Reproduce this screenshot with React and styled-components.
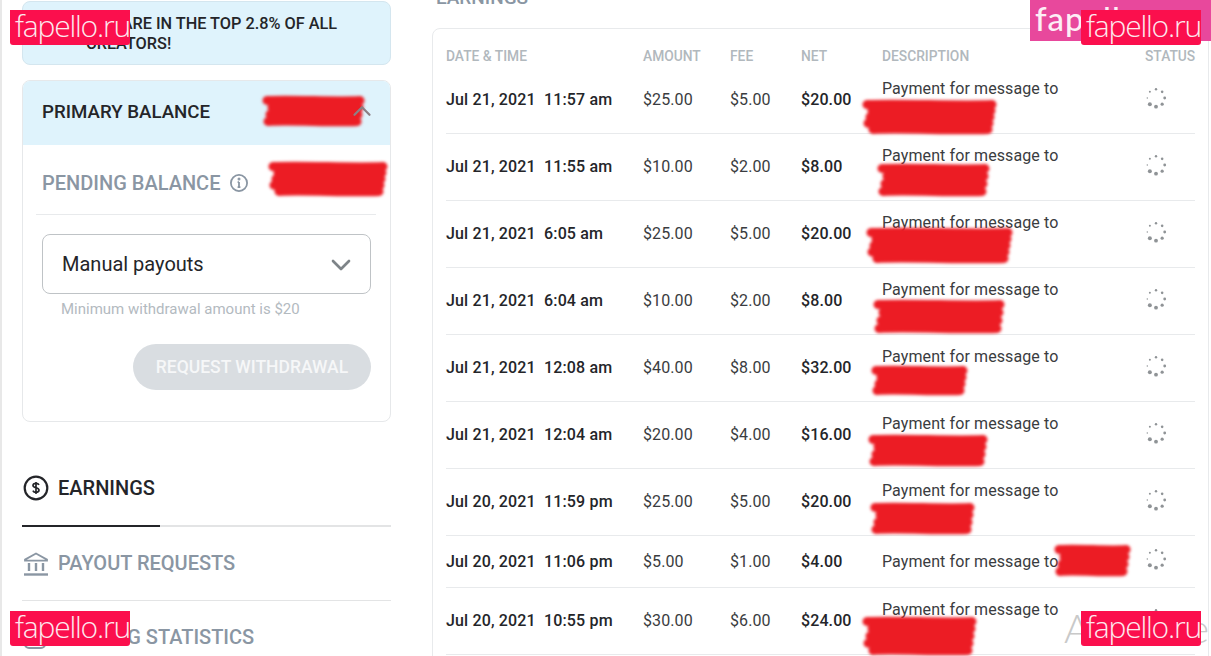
import React from "react";
import styled, { createGlobalStyle } from "styled-components";
import { ChevronDown, ChevronUp } from "lucide-react";

const Global = createGlobalStyle`
  html, body { margin: 0; padding: 0; background: #fff; }
  body { font-family: Roboto, "Liberation Sans", sans-serif; color: #242529; }
`;

const Page = styled.div`
  position: relative;
  width: 1211px;
  height: 656px;
  overflow: hidden;
  display: flex;
  align-items: flex-start;
  background: #fff;
  box-sizing: border-box;
  box-shadow: inset 2px 0 0 #e8e8e8;
  padding-left: 22px;
`;

const Side = styled.aside`
  width: 369px;
  flex: none;
  padding-top: 1px;
`;

const Banner = styled.div`
  box-sizing: border-box;
  height: 64px;
  padding: 12px 20px 0 63px;
  background: #dff3fc;
  border: 1px solid #d4e6ef;
  border-radius: 8px;
  font-size: 16.3px;
  font-weight: 500;
  line-height: 20px;
  color: #242529;
  text-transform: uppercase;
`;

const BalanceCard = styled.section`
  box-sizing: border-box;
  height: 342px;
  margin-top: 15px;
  border: 1px solid #e6e8ea;
  border-radius: 8px;
  overflow: hidden;
`;

const BalanceHead = styled.div`
  box-sizing: border-box;
  height: 64px;
  padding: 0 13px 2px 19px;
  display: flex;
  align-items: center;
  justify-content: space-between;
  background: #dff3fc;
  font-size: 18.7px;
  font-weight: 500;
  color: #242529;
  text-transform: uppercase;
  svg { position: relative; z-index: 1; color: #8d7f84; margin-top: -2px; }
`;

const PendingRow = styled.div`
  height: 70px;
  margin: 0 14px 0 13px;
  padding: 6px 0 0 6px;
  display: flex;
  align-items: center;
  gap: 9px;
  border-bottom: 1px solid #e8eaec;
  box-sizing: border-box;
  font-size: 20px;
  font-weight: 500;
  color: #8a96a3;
`;

const Body = styled.div`
  padding: 19px 19px 0;
  display: flex;
  flex-direction: column;
`;

const Select = styled.div`
  box-sizing: border-box;
  height: 60px;
  display: flex;
  align-items: center;
  justify-content: space-between;
  padding: 0 13px 0 19px;
  border: 1px solid #bfc3c6;
  border-radius: 8px;
  font-size: 20px;
  color: #242529;
  svg { color: #7e8488; margin-top: 2px; }
`;

const Hint = styled.div`
  margin: 6px 0 0 19px;
  font-size: 15px;
  line-height: 18px;
  color: #b3babf;
`;

const WithdrawButton = styled.button`
  align-self: flex-end;
  width: 238px;
  height: 46px;
  margin-top: 26px;
  border: 0;
  border-radius: 23px;
  background: #d9dde1;
  color: #f6f7f8;
  font: 500 17.5px Roboto, sans-serif;
  text-transform: uppercase;
  padding: 0;
`;

const Tabs = styled.nav`
  margin-top: 30px;
  display: flex;
  flex-direction: column;
`;

const Tab = styled.div`
  position: relative;
  box-sizing: border-box;
  height: ${(p) => p.$h}px;
  display: flex;
  align-items: ${(p) => (p.$active ? "flex-start" : "center")};
  padding: ${(p) => (p.$active ? "23px 0 0 1px" : "0 0 0 1px")};
  gap: 9px;
  border-bottom: ${(p) => p.$bw}px solid #e3e4e5;
  font-size: 20px;
  font-weight: 500;
  line-height: 27px;
  color: ${(p) => (p.$active ? "#242529" : "#8a96a3")};
  &::after {
    content: "";
    display: ${(p) => (p.$active ? "block" : "none")};
    position: absolute;
    left: 0;
    bottom: -2px;
    width: 138px;
    height: 2px;
    background: #242529;
  }
`;

const Main = styled.main`
  width: 777px;
  flex: none;
  margin: -9px 0 0 41px;
`;

const Heading = styled.h2`
  margin: 0 0 0 4px;
  height: 37px;
  font-size: 19px;
  line-height: 14px;
  font-weight: 500;
  color: #8a96a3;
`;

const Card = styled.section`
  box-sizing: border-box;
  height: 680px;
  padding: 0 13px;
  border: 1px solid #e8eaec;
  border-radius: 8px;
`;

const Columns = `
  display: grid;
  grid-template-columns: 197px 87px 71px 81px 1fr 50px;
  align-items: center;
`;

const HeadRow = styled.div`
  ${Columns}
  box-sizing: border-box;
  height: 38px;
  padding-top: 16px;
  font-size: 13.8px;
  font-weight: 500;
  color: #b1b8bd;
  text-transform: uppercase;
`;

const Row = styled.div`
  ${Columns}
  box-sizing: border-box;
  height: ${(p) => (p.$single ? 52 : 67)}px;
  padding-bottom: ${(p) => (p.$single ? 0 : 2)}px;
  border-bottom: 1px solid #e8eaec;
  font-size: 16px;
  letter-spacing: 0.1px;
  color: #3a3c40;
`;

const DateCell = styled.div`
  font-weight: 500;
  letter-spacing: 0.15px;
  color: #242529;
  white-space: pre;
`;

const NetCell = styled.div`
  font-weight: 500;
  color: #242529;
`;

const Desc = styled.div`
  line-height: 22px;
  height: ${(p) => (p.$single ? "22px" : "44px")};
  margin-top: ${(p) => (p.$single ? 0 : 2)}px;
  color: #3a3c40;
`;

const StatusCell = styled.div`
  display: flex;
  margin-top: ${(p) => (p.$single ? -5 : -3)}px;
`;

const Scribble = styled.svg`
  position: absolute;
  left: ${(p) => p.$x}px;
  top: ${(p) => p.$y}px;
  width: ${(p) => p.$w}px;
  height: ${(p) => p.$h}px;
  filter: blur(1.4px);
  overflow: visible;
`;

const Mark = styled.div`
  position: absolute;
  z-index: 2;
  left: ${(p) => p.$x}px;
  top: ${(p) => p.$y}px;
  box-sizing: border-box;
  width: 120px;
  height: 35px;
  padding-left: 5px;
  background: #fb0f4d;
  border-radius: 0 0 3px 3px;
  color: #fde8ee;
  font: 300 30px/31px "Open Sans", sans-serif;
  letter-spacing: -1.2px;
  white-space: nowrap;
  overflow: hidden;
`;

const PinkMark = styled.div`
  position: absolute;
  z-index: 2;
  left: 1030px;
  top: 0;
  width: 181px;
  height: 41px;
  padding-left: 5px;
  box-sizing: border-box;
  background: #e8489c;
  color: #fdeef6;
  font: 500 33px/36px Lato, sans-serif;
  letter-spacing: 1px;
  white-space: nowrap;
  overflow: hidden;
`;

const Ghost = styled.div`
  position: absolute;
  left: 1064px;
  top: 605px;
  width: 145px;
  display: flex;
  justify-content: space-between;
  font: 300 40px/46px Lato, sans-serif;
  color: #c9c9c9;
`;

const InfoIcon = () => (
  <svg width="20" height="20" viewBox="0 0 20 20" fill="none" stroke="#8a96a3" strokeWidth="1.8">
    <circle cx="10" cy="10" r="8.1" />
    <path d="M10 9v5.2M8.6 9.2H10M8.6 14.2h2.8" />
    <circle cx="10" cy="6" r="0.6" fill="#8a96a3" />
  </svg>
);

const DollarIcon = () => (
  <svg width="26" height="26" viewBox="0 0 26 26" fill="none" stroke="#242529">
    <circle cx="13" cy="13" r="11.3" strokeWidth="2.2" />
    <path d="M16 9.8c-.5-1-1.6-1.5-3-1.5-1.7 0-3 .8-3 2.2 0 3 6 1.5 6 4.6 0 1.4-1.3 2.3-3 2.3-1.5 0-2.6-.6-3.1-1.7M13 7v12" strokeWidth="1.7" />
  </svg>
);

const BankIcon = () => (
  <svg width="26" height="26" viewBox="0 0 26 26" fill="none" stroke="#8a96a3">
    <path d="M13 2.5 24 8.6v1H2v-1z" strokeWidth="1.8" />
    <path d="M6 12v8M13 12v8M20 12v8" strokeWidth="2.4" />
    <path d="M1 23.5h24" strokeWidth="2.4" />
  </svg>
);

const StatsIcon = () => (
  <svg width="24" height="24" viewBox="0 0 24 24" fill="none" stroke="#8a96a3" strokeWidth="2.2">
    <rect x="2" y="2" width="20" height="20" rx="4" />
    <path d="M7 16v-4M12 16V8M17 16v-6" />
  </svg>
);

const Spinner = () => {
  const sizes = [2, 1.9, 1.6, 1.4, 1.3, 1.2, 1, 0.7];
  return (
    <svg width="22" height="22" viewBox="0 0 22 22">
      {sizes.map((r, i) => {
        const a = ((135 - 45 * i) * Math.PI) / 180;
        return <circle key={i} cx={11 + 8.7 * Math.cos(a)} cy={11 + 8.7 * Math.sin(a)} r={r} fill="#8f9396" />;
      })}
    </svg>
  );
};

const rows = [
  ["Jul 21, 2021  11:57 am", "$25.00", "$5.00", "$20.00"],
  ["Jul 21, 2021  11:55 am", "$10.00", "$2.00", "$8.00"],
  ["Jul 21, 2021  6:05 am", "$25.00", "$5.00", "$20.00"],
  ["Jul 21, 2021  6:04 am", "$10.00", "$2.00", "$8.00"],
  ["Jul 21, 2021  12:08 am", "$40.00", "$8.00", "$32.00"],
  ["Jul 21, 2021  12:04 am", "$20.00", "$4.00", "$16.00"],
  ["Jul 20, 2021  11:59 pm", "$25.00", "$5.00", "$20.00"],
  ["Jul 20, 2021  11:06 pm", "$5.00", "$1.00", "$4.00", true],
  ["Jul 20, 2021  10:55 pm", "$30.00", "$6.00", "$24.00"],
];

const scribbles = [
  [262, 97, 103, 28],
  [268, 163, 120, 32],
  [862, 101, 135, 32],
  [877, 165, 113, 30],
  [866, 229, 147, 33],
  [873, 301, 132, 31],
  [871, 367, 97, 27],
  [868, 436, 120, 29],
  [870, 504, 105, 29],
  [1054, 546, 77, 29],
  [862, 618, 115, 36],
];

const Redact = ({ x, y, w, h }) => {
  const step = 7;
  const n = Math.max(2, Math.round((h - step) / step) + 1);
  const lines = Array.from({ length: n }, (_, i) => {
    const yy = step / 2 + ((h - step) * i) / (n - 1);
    const l = 5 + ((i * 5) % 7);
    const rr = w - 5 - ((i * 9) % 8);
    return `M${l} ${yy}C${w * 0.3} ${yy - 1.5} ${w * 0.7} ${yy + 1.5} ${rr} ${yy}`;
  }).join("");
  return (
    <Scribble $x={x} $y={y} $w={w} $h={h} viewBox={`0 0 ${w} ${h}`}>
      <path d={lines} fill="none" stroke="#ec1c24" strokeWidth={step + 2} strokeLinecap="round" />
    </Scribble>
  );
};

export default function App() {
  return (
    <Page>
      <Global />
      <Side>
        <Banner>You are in the top 2.8% of all creators!</Banner>
        <BalanceCard>
          <BalanceHead>
            Primary Balance
            <ChevronUp size={30} strokeWidth={1.8} />
          </BalanceHead>
          <PendingRow>
            PENDING BALANCE
            <InfoIcon />
          </PendingRow>
          <Body>
            <Select>
              Manual payouts
              <ChevronDown size={32} strokeWidth={2} />
            </Select>
            <Hint>Minimum withdrawal amount is $20</Hint>
            <WithdrawButton>Request withdrawal</WithdrawButton>
          </Body>
        </BalanceCard>
        <Tabs>
          <Tab $active $h={75} $bw={2}>
            <DollarIcon />
            EARNINGS
          </Tab>
          <Tab $h={74} $bw={1}>
            <BankIcon />
            PAYOUT REQUESTS
          </Tab>
          <Tab $h={74} $bw={1}>
            <StatsIcon />
            EARNING STATISTICS
          </Tab>
        </Tabs>
      </Side>
      <Main>
        <Heading>EARNINGS</Heading>
        <Card>
          <HeadRow>
            <div>Date &amp; Time</div>
            <div>Amount</div>
            <div>Fee</div>
            <div>Net</div>
            <div>Description</div>
            <div>Status</div>
          </HeadRow>
          {rows.map(([date, amount, fee, net, single]) => (
            <Row key={date} $single={single}>
              <DateCell>{date}</DateCell>
              <div>{amount}</div>
              <div>{fee}</div>
              <NetCell>{net}</NetCell>
              <Desc $single={single}>Payment for message to</Desc>
              <StatusCell $single={single}>
                <Spinner />
              </StatusCell>
            </Row>
          ))}
        </Card>
      </Main>
      {scribbles.map(([x, y, w, h]) => (
        <Redact key={`${x}-${y}`} x={x} y={y} w={w} h={h} />
      ))}
      <Ghost>
        <span>A</span>
        <span>e</span>
      </Ghost>
      <PinkMark>fapello.ru</PinkMark>
      <Mark $x={10} $y={10}>fapello.ru</Mark>
      <Mark $x={1081} $y={10}>fapello.ru</Mark>
      <Mark $x={10} $y={611}>fapello.ru</Mark>
      <Mark $x={1081} $y={611}>fapello.ru</Mark>
    </Page>
  );
}
